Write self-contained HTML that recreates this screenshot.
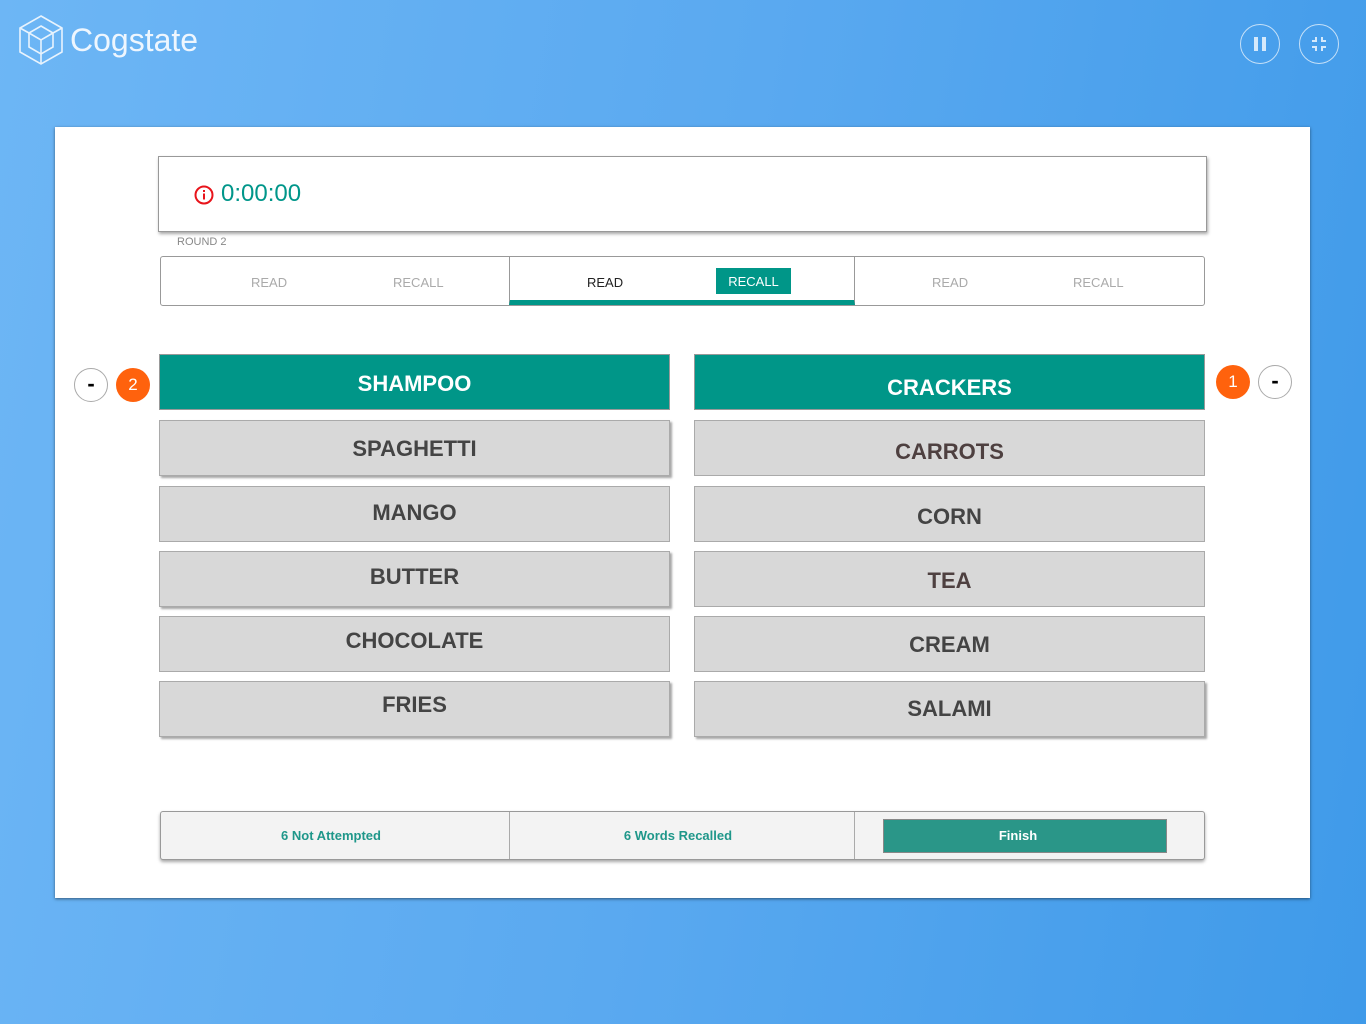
<!DOCTYPE html>
<html><head><style>
*{margin:0;padding:0;box-sizing:border-box}
body{width:1366px;height:1024px;overflow:hidden;background:linear-gradient(100deg,#6db6f5 0%,#5aa9f0 50%,#3f9ae9 100%);font-family:"Liberation Sans",sans-serif;position:relative}
.abs{position:absolute}
.panel{left:55px;top:127px;width:1255px;height:771px;background:#fff;box-shadow:0 1px 3px rgba(0,0,0,.5)}
.timer{left:158px;top:156px;width:1049px;height:76px;border:1px solid #999;box-shadow:1px 2px 3px rgba(0,0,0,.35);background:#fff}
.tabs{left:160px;top:256px;width:1045px;height:50px;border:1px solid #999;border-radius:3px;background:#fff}
.tab{position:absolute;top:0;height:48px;font-size:13px;color:#aaa}
.tab span{position:absolute;top:18px}
.w{position:absolute;width:511px;height:56px;background:#d8d8d8;border:1px solid #aaa;text-align:center;font-weight:bold;font-size:22px;line-height:54px;color:#444}
.w.sh{box-shadow:2px 2px 2px rgba(0,0,0,.35)}
.w.g{background:#009688;color:#fff;border-color:#999}
.r{color:#4e4040}
.circ{position:absolute;width:34px;height:34px;border-radius:50%;text-align:center;line-height:34px;font-size:17px}
.min{border:1px solid #aaa;background:#fff;color:#000;font-weight:bold;font-size:22px;line-height:30px}
.num{background:#ff620d;color:#fff}
.foot{left:160px;top:811px;width:1045px;height:49px;border:1px solid #999;border-radius:3px;background:#f3f3f3;box-shadow:0 2px 3px rgba(0,0,0,.35);font-size:13px;font-weight:bold;color:#1f978a}
</style></head><body>
<svg class="abs" style="left:17px;top:14px" width="48" height="52" viewBox="0 0 48 52" fill="none" stroke="#e8f3fd" stroke-width="1.6">
<path d="M24 2 L45 14 L45 38 L24 50 L3 38 L3 14 Z"/>
<path d="M24 12 L36 19 L36 33 L24 40 L12 33 L12 19 Z"/>
<path d="M12 19 L24 26 L36 19 M24 26 L24 40"/>
<path d="M3 14 L12 19 M45 14 L36 19 M24 40 L24 50"/>
</svg>
<div class="abs" style="left:70px;top:22px;font-size:32px;color:#eef6fe">Cogstate</div>
<div class="abs" style="left:1240px;top:24px;width:40px;height:40px;border:1.5px solid #c5e0f8;border-radius:50%"></div>
<div class="abs" style="left:1254px;top:37px;width:4px;height:14px;background:#d5e9fb"></div>
<div class="abs" style="left:1262px;top:37px;width:4px;height:14px;background:#d5e9fb"></div>
<div class="abs" style="left:1299px;top:24px;width:40px;height:40px;border:1.5px solid #c5e0f8;border-radius:50%"></div>
<svg class="abs" style="left:1311px;top:36px" width="16" height="16" viewBox="0 0 16 16" fill="none" stroke="#d5e9fb" stroke-width="2"><path d="M5 1V5H1M11 1V5H15M5 15V11H1M11 15V11H15"/></svg>

<div class="abs panel"></div>
<div class="abs timer">
<svg class="abs" style="left:35px;top:28px" width="20" height="20" viewBox="0 0 20 20"><circle cx="10" cy="10" r="8.5" fill="none" stroke="#e8141b" stroke-width="2"/><rect x="9" y="8.5" width="2" height="6" fill="#e8141b"/><rect x="9" y="5" width="2" height="2" fill="#e8141b"/></svg>
<div class="abs" style="left:62px;top:23px;font-size:24px;color:#00968a">0:00:00</div>
</div>
<div class="abs" style="left:177px;top:236px;font-size:11px;color:#888">ROUND 2</div>
<div class="abs tabs">
<div class="tab" style="left:0;width:348px"><span style="left:90px">READ</span><span style="left:232px">RECALL</span></div>
<div class="tab" style="left:348px;width:346px;border-left:1px solid #999;border-right:1px solid #999;border-bottom:5px solid #009688;height:48px">
<span style="left:77px;color:#222">READ</span>
<div style="position:absolute;left:206px;top:11px;width:75px;height:26px;background:#009688;color:#fff;text-align:center;line-height:27px">RECALL</div></div>
<div class="tab" style="left:694px;width:350px"><span style="left:77px">READ</span><span style="left:218px">RECALL</span></div>
</div>

<div class="circ min" style="left:74px;top:368px">-</div>
<div class="circ num" style="left:116px;top:368px">2</div>
<div class="circ num" style="left:1216px;top:365px">1</div>
<div class="circ min" style="left:1258px;top:365px">-</div>

<div class="w g" style="left:159px;top:354px;line-height:58px">SHAMPOO</div>
<div class="w sh" style="left:159px;top:420px;line-height:56px">SPAGHETTI</div>
<div class="w" style="left:159px;top:486px;line-height:52px">MANGO</div>
<div class="w sh" style="left:159px;top:551px;line-height:50px">BUTTER</div>
<div class="w" style="left:159px;top:616px;line-height:48px">CHOCOLATE</div>
<div class="w sh" style="left:159px;top:681px;line-height:46px">FRIES</div>

<div class="w g" style="left:694px;top:354px;line-height:66px">CRACKERS</div>
<div class="w r" style="left:694px;top:420px;line-height:62px">CARROTS</div>
<div class="w" style="left:694px;top:486px;line-height:60px">CORN</div>
<div class="w r" style="left:694px;top:551px;line-height:58px">TEA</div>
<div class="w" style="left:694px;top:616px;line-height:56px">CREAM</div>
<div class="w sh" style="left:694px;top:681px;line-height:54px">SALAMI</div>

<div class="abs foot">
<div class="abs" style="left:0;width:340px;top:16px;text-align:center">6 Not Attempted</div>
<div class="abs" style="left:348px;width:346px;top:0;height:47px;border-left:1px solid #aaa;border-right:1px solid #aaa"></div>
<div class="abs" style="left:344px;width:346px;top:16px;text-align:center">6 Words Recalled</div>
<div class="abs" style="left:722px;top:7px;width:284px;height:34px;background:#2a9688;border:1px solid #888;color:#fff;text-align:center;line-height:32px;padding-right:14px">Finish</div>
</div>
</body></html>
